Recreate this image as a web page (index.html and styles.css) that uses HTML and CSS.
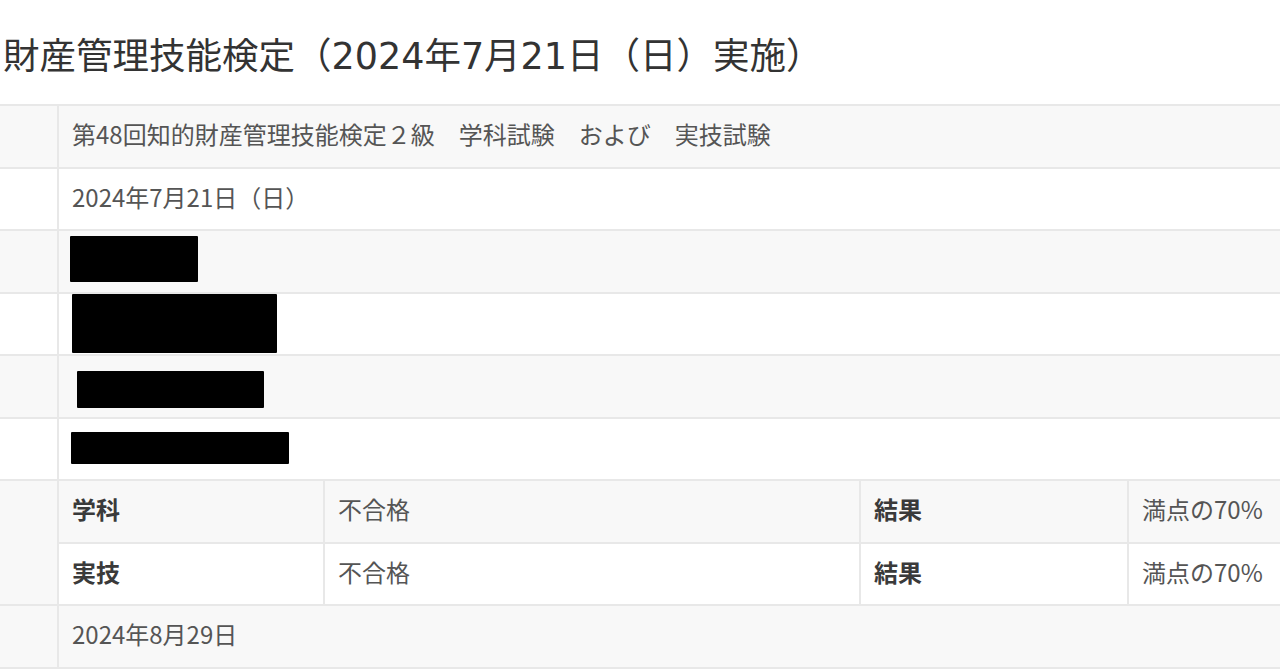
FILE: index.html
```html
<!DOCTYPE html>
<html lang="ja">
<head>
<meta charset="utf-8">
<title>財産管理技能検定</title>
<link rel="stylesheet" href="styles.css">
</head>
<body>
<h1 class="title">財産管理技能検定（2024年7月21日（日）実施）</h1>
<table class="result">
  <colgroup>
    <col class="c-head">
    <col class="c-label">
    <col class="c-value">
    <col class="c-label2">
    <col class="c-value2">
  </colgroup>
  <tbody>
    <tr class="odd">
      <th></th>
      <td colspan="4">第48回知的財産管理技能検定２級　学科試験　および　実技試験</td>
    </tr>
    <tr class="even">
      <th></th>
      <td colspan="4">2024年7月21日（日）</td>
    </tr>
    <tr class="odd">
      <th></th>
      <td colspan="4" class="masked"><span class="redact r1"></span></td>
    </tr>
    <tr class="even">
      <th></th>
      <td colspan="4" class="masked"><span class="redact r2"></span></td>
    </tr>
    <tr class="odd">
      <th></th>
      <td colspan="4" class="masked"><span class="redact r3"></span></td>
    </tr>
    <tr class="even">
      <th></th>
      <td colspan="4" class="masked"><span class="redact r4"></span></td>
    </tr>
    <tr class="odd">
      <th rowspan="2"></th>
      <td class="label">学科</td>
      <td>不合格</td>
      <td class="label">結果</td>
      <td>満点の70%</td>
    </tr>
    <tr class="even">
      <td class="label">実技</td>
      <td>不合格</td>
      <td class="label">結果</td>
      <td>満点の70%</td>
    </tr>
    <tr class="odd">
      <th></th>
      <td colspan="4">2024年8月29日</td>
    </tr>
  </tbody>
</table>
</body>
</html>
```

FILE: styles.css
```css
html, body {
  margin: 0;
  padding: 0;
  background: #ffffff;
  overflow: hidden;
}

body {
  font-family: "Noto Sans CJK JP", "Noto Sans", sans-serif;
  color: #555555;
}

.title {
  margin: 0;
  height: 104px;
  box-sizing: border-box;
  padding: 10px 0 0 3px;
  display: flex;
  align-items: center;
  font-family: "DejaVu Sans", "Noto Sans CJK JP", sans-serif;
  font-size: 36.5px;
  line-height: 1.2;
  font-weight: 400;
  letter-spacing: 0;
  color: #333333;
}

.result {
  width: 100%;
  border-collapse: collapse;
  table-layout: fixed;
  border-left: hidden;
  border-right: hidden;
  font-size: 24px;
  line-height: 1.2;
}

.c-head { width: 58px; }
.c-label { width: 266px; }
.c-value { width: 536px; }
.c-label2 { width: 268px; }
.c-value2 { width: auto; }

.result tr {
  height: 62.5px;
}

.result th,
.result td {
  border: 2px solid #e8e8e8;
  padding: 0 14px 3px 14px;
  text-align: left;
  vertical-align: middle;
  white-space: nowrap;
  font-weight: 400;
}

.result td {
  padding-left: 13px;
}

.result td.masked {
  padding-bottom: 0;
}

.odd th,
.odd td {
  background: #f8f8f8;
}

.even th,
.even td {
  background: #ffffff;
}

th[rowspan] {
  background: #f8f8f8;
}

.result td.label {
  font-weight: 700;
  color: #3a3a3a;
}

.redact {
  display: block;
  background: #000000;
  border-radius: 1px;
}

.r1 { width: 128px; height: 46px; margin: 0 0 5px -2px; }
.r2 { width: 205px; height: 59px; margin: 0 0 0 0; }
.r3 { width: 187px; height: 37px; margin: 6px 0 0 5px; }
.r4 { width: 218px; height: 32px; margin: 0 0 2px -1px; }
```
